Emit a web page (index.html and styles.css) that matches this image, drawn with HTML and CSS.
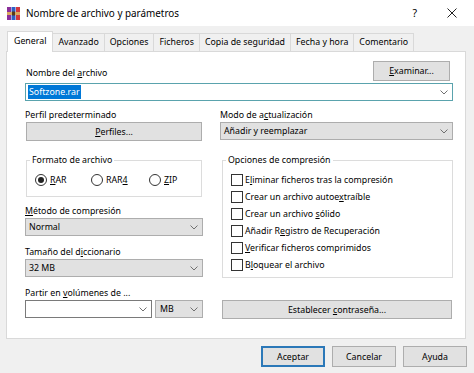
FILE: index.html
```html
<!DOCTYPE html>
<html lang="es">
<head>
<meta charset="utf-8">
<title>Nombre de archivo y parámetros</title>
<link rel="stylesheet" href="styles.css">
</head>
<body>
<div class="dialog">
  <header class="titlebar">
    <svg class="app-icon" width="13" height="13" viewBox="0 0 13 13">
      <rect x="0" y="0" width="4" height="13" fill="#8a2f9a"/>
      <rect x="4.5" y="0" width="4" height="13" fill="#2f5fc4"/>
      <rect x="9" y="0" width="4" height="13" fill="#d2383c"/>
      <rect x="0" y="5" width="13" height="3" fill="#d9a860"/>
      <rect x="5" y="4.5" width="3" height="4" fill="#5a3a1a"/>
    </svg>
    <span class="title">Nombre de archivo y parámetros</span>
    <span class="help">?</span>
    <svg class="close" width="10" height="10" viewBox="0 0 10 10"><path d="M0.5 0.5 L9.5 9.5 M9.5 0.5 L0.5 9.5" stroke="#222" stroke-width="1" fill="none"/></svg>
  </header>

  <nav class="tabs">
    <div class="tab active">General</div>
    <div class="tab">Avanzado</div>
    <div class="tab">Opciones</div>
    <div class="tab">Ficheros</div>
    <div class="tab">Copia de seguridad</div>
    <div class="tab">Fecha y hora</div>
    <div class="tab">Comentario</div>
  </nav>

  <main class="panel">
    <div class="name-row">
      <div class="label name-label">Nombre del <u>a</u>rchivo</div>
      <div class="btn btn-browse"><span><u>E</u>xaminar...</span></div>
    </div>
    <div class="combo edit focus">
      <span class="combo-text"><span class="sel">Softzone.rar</span></span>
      <svg class="chev" width="8" height="5" viewBox="0 0 8 5"><path d="M0.5 0.5 L4 4 L7.5 0.5" fill="none" stroke="#707070"/></svg>
    </div>

    <div class="columns">
      <div class="col">
        <div class="label">Perfil predeterminado</div>
        <div class="btn btn-profiles"><span><u>P</u>erfiles...</span></div>

        <fieldset class="group group-format">
          <legend>Formato de archivo</legend>
          <div class="radios">
            <div class="radio-item item-rar"><span class="radio checked"></span><span><u>R</u>AR</span></div>
            <div class="radio-item item-rar4"><span class="radio"></span><span>RAR<u>4</u></span></div>
            <div class="radio-item"><span class="radio"></span><span><u>Z</u>IP</span></div>
          </div>
        </fieldset>

        <div class="label mt7"><u>M</u>étodo de compresión</div>
        <div class="combo">
          <span class="combo-text">Normal</span>
          <svg class="chev" width="8" height="5" viewBox="0 0 8 5"><path d="M0.5 0.5 L4 4 L7.5 0.5" fill="none" stroke="#707070"/></svg>
        </div>

        <div class="label mt9">Tamaño del d<u>i</u>ccionario</div>
        <div class="combo">
          <span class="combo-text">32 MB</span>
          <svg class="chev" width="8" height="5" viewBox="0 0 8 5"><path d="M0.5 0.5 L4 4 L7.5 0.5" fill="none" stroke="#707070"/></svg>
        </div>

        <div class="label mt9">Partir en <u>v</u>olúmenes de ...</div>
        <div class="split">
          <div class="combo edit grow">
            <span class="combo-text"></span>
            <svg class="chev" width="8" height="5" viewBox="0 0 8 5"><path d="M0.5 0.5 L4 4 L7.5 0.5" fill="none" stroke="#707070"/></svg>
          </div>
          <div class="combo unit">
            <span class="combo-text">MB</span>
            <svg class="chev" width="8" height="5" viewBox="0 0 8 5"><path d="M0.5 0.5 L4 4 L7.5 0.5" fill="none" stroke="#707070"/></svg>
          </div>
        </div>
      </div>

      <div class="col">
        <div class="label">Modo de a<u>c</u>tualización</div>
        <div class="combo">
          <span class="combo-text">Añadir y reemplazar</span>
          <svg class="chev" width="8" height="5" viewBox="0 0 8 5"><path d="M0.5 0.5 L4 4 L7.5 0.5" fill="none" stroke="#707070"/></svg>
        </div>

        <fieldset class="group group-options">
          <legend>Opciones de compresión</legend>
          <div class="check-row"><span class="checkbox"></span><span>E<u>l</u>iminar ficheros tras la compresión</span></div>
          <div class="check-row"><span class="checkbox"></span><span>Crear un archivo autoe<u>x</u>traíble</span></div>
          <div class="check-row"><span class="checkbox"></span><span>Crear un archivo <u>s</u>ólido</span></div>
          <div class="check-row"><span class="checkbox"></span><span>Añadir R<u>e</u>gistro de Recuperación</span></div>
          <div class="check-row"><span class="checkbox"></span><span><u>V</u>erificar ficheros comprimidos</span></div>
          <div class="check-row"><span class="checkbox"></span><span>B<u>l</u>oquear el archivo</span></div>
        </fieldset>

        <div class="btn btn-password"><span>Establecer <u>c</u>ontraseña...</span></div>
      </div>
    </div>
  </main>

  <footer class="footer">
    <div class="btn fbtn default">Aceptar</div>
    <div class="btn fbtn">Cancelar</div>
    <div class="btn fbtn">Ayuda</div>
  </footer>
</div>
</body>
</html>
```

FILE: styles.css
```css
* { box-sizing: border-box; }
html, body { margin: 0; padding: 0; }
body {
  background: #f0f0f0;
  font-family: "Noto Sans", "Open Sans", sans-serif;
  font-size: 8.8px;
  color: #000;
  width: 474px;
  height: 373px;
  overflow: hidden;
}
u { text-underline-offset: 1px; }

.dialog { display: flex; flex-direction: column; width: 474px; height: 373px; }

.titlebar {
  height: 26px;
  flex: none;
  background: #fff;
  display: flex;
  align-items: center;
  padding-left: 7px;
}
.app-icon { flex: none; margin-right: 6px; }
.title { flex: 1; font-size: 9.9px; }
.help { font-size: 10.5px; margin-right: 30px; }
.close { flex: none; margin-right: 17px; }

.tabs {
  display: flex;
  align-items: flex-end;
  height: 21px;
  flex: none;
  margin-top: 5px;
  padding-left: 7px;
}
.tab {
  height: 19px;
  line-height: 17px;
  padding: 0 5px;
  border: 1px solid #d9d9d9;
  border-bottom: none;
  margin-left: -1px;
  background: #f0f0f0;
  white-space: nowrap;
}
.tab.active {
  height: 21px;
  line-height: 19px;
  margin-left: 0;
  padding: 0 6px;
  background: #fff;
  position: relative;
  z-index: 1;
}

.panel {
  flex: none;
  margin: -1px 8px 0 6px;
  height: 288px;
  border: 1px solid #d9d9d9;
  background: #fff;
  padding: 9px 12px 0 18px;
}

.label { line-height: 14px; height: 14px; white-space: nowrap; }
.mt7 { margin-top: 7px; }
.mt9 { margin-top: 9px; }

.name-row {
  display: flex;
  justify-content: space-between;
  align-items: flex-end;
  height: 20px;
}
.name-label { margin-bottom: 1px; margin-left: 1px; }

.btn {
  height: 19px;
  border: 1px solid #adadad;
  background: #e1e1e1;
  display: flex;
  align-items: center;
  justify-content: center;
  line-height: 14px;
  white-space: nowrap;
}
.btn-browse { width: 77px; height: 20px; margin-right: 3px; }
.btn-profiles { margin: 0 1px; }
.btn-password { margin: 22px 1px 0 2px; }

.combo {
  height: 18px;
  display: flex;
  align-items: center;
  justify-content: space-between;
  padding: 0 4px 0 3px;
  border: 1px solid #adadad;
  background: #e1e1e1;
  line-height: 16px;
  white-space: nowrap;
}
.combo.edit { background: #fff; border-color: #7a7a7a; }
.combo.focus { border-color: #5aa3ad; margin-top: 2px; padding-left: 2px; }
.chev { flex: none; }
.sel { background: #0078d7; color: #fff; padding: 0 1px; line-height: 14px; display: inline-block; }

.columns {
  display: grid;
  grid-template-columns: 178px 1fr;
  column-gap: 17px;
  margin-top: 7px;
}
.col { display: flex; flex-direction: column; }

.group {
  margin: 0;
  border: 1px solid #dcdcdc;
  min-width: 0;
}
.group legend {
  padding: 0 2px;
  margin-left: -5px;
  line-height: 14px;
  white-space: nowrap;
}
.group-format { margin: 12px 1px 0; padding: 6px 0 9px 8px; }
.group-options { margin: 13px 0 0 2px; padding: 4px 0 4px 8px; }

.radios { display: flex; align-items: center; height: 14px; }
.radio-item { display: flex; align-items: center; gap: 3px; }
.item-rar { width: 56px; }
.item-rar4 { width: 58px; }
.radio {
  width: 12px;
  height: 12px;
  border: 1px solid #333;
  border-radius: 50%;
  background: #fff;
  display: inline-flex;
  align-items: center;
  justify-content: center;
}
.radio.checked::after {
  content: "";
  width: 6px;
  height: 6px;
  border-radius: 50%;
  background: #222;
}

.check-row { display: flex; align-items: center; height: 17px; gap: 2px; white-space: nowrap; }
.checkbox {
  flex: none;
  width: 12px;
  height: 12px;
  border: 1px solid #333;
  background: #fff;
}

.split { display: flex; gap: 3px; }
.grow { flex: 1; }
.unit { width: 48px; flex: none; padding-left: 4px; }

.footer {
  flex: none;
  display: flex;
  justify-content: flex-end;
  gap: 7px;
  padding-right: 7px;
  margin-top: 7px;
}
.fbtn { width: 64px; height: 21px; }
.fbtn.default { border-color: #2b78b8; box-shadow: inset 0 0 0 1px #2b78b8; }
```
